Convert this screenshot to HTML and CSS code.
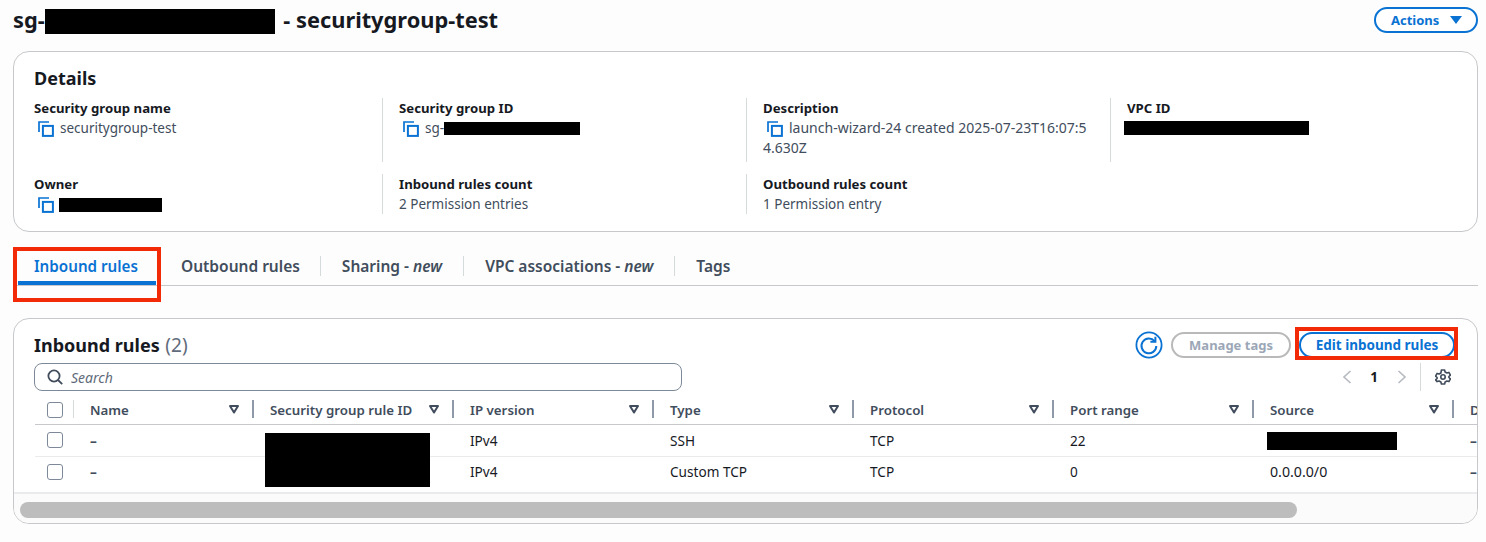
FILE: index.html
```html
<!DOCTYPE html>
<html lang="en">
<head>
  <meta charset="UTF-8" />
  <title>Security group</title>
  <link rel="stylesheet" href="styles.css">
</head>
<body>
  <svg class="defs" width="0" height="0">
    <symbol id="copy" viewBox="0 0 16 16">
      <path d="M1 11V1h10" fill="none" stroke="currentColor" stroke-width="1.7" />
      <rect x="4.9" y="4.9" width="10" height="10" fill="none" stroke="currentColor" stroke-width="2" />
    </symbol>
    <symbol id="sort" viewBox="0 0 12 12">
      <path d="M2 3h8L6 9.5z" fill="none" stroke="currentColor" stroke-width="2" stroke-linejoin="round" />
    </symbol>
  </svg>

  <header class="page-head">
    <h1>sg-<span class="redact redact-title"></span> - securitygroup-test</h1>
    <button class="btn btn-actions">Actions <span class="caret"></span></button>
  </header>

  <section class="card details">
    <h2>Details</h2>
    <div class="detail-grid">
      <div class="item">
        <strong>Security group name</strong>
        <p><svg class="copy"><use href="#copy" /></svg>securitygroup-test</p>
      </div>
      <div class="item">
        <strong>Security group ID</strong>
        <p><svg class="copy"><use href="#copy" /></svg>sg-<span class="redact redact-sg"></span></p>
      </div>
      <div class="item">
        <strong>Description</strong>
        <p class="long"><svg class="copy"><use href="#copy" /></svg>launch-wizard-24 created 2025-07-23T16:07:5<br>4.630Z</p>
      </div>
      <div class="item">
        <strong>VPC ID</strong>
        <p><span class="redact redact-vpc"></span></p>
      </div>
      <div class="item">
        <strong>Owner</strong>
        <p><svg class="copy"><use href="#copy" /></svg><span class="redact redact-owner"></span></p>
      </div>
      <div class="item">
        <strong>Inbound rules count</strong>
        <p>2 Permission entries</p>
      </div>
      <div class="item">
        <strong>Outbound rules count</strong>
        <p>1 Permission entry</p>
      </div>
    </div>
  </section>

  <nav class="tabs">
    <a class="tab active">Inbound rules</a>
    <a class="tab">Outbound rules</a>
    <a class="tab">Sharing - <em>new</em></a>
    <a class="tab">VPC associations - <em>new</em></a>
    <a class="tab">Tags</a>
  </nav>

  <section class="card rules">
    <div class="rules-top">
      <h2>Inbound rules <span class="count">(2)</span></h2>
      <div class="rules-actions">
        <button class="refresh">
          <svg width="28" height="28" viewBox="0 0 28 28" fill="none" stroke="#0972d3">
            <circle cx="14" cy="14" r="12.6" stroke-width="1.8" />
            <path d="M19.6 10.2A7.4 7.4 0 1 0 21.3 15" stroke-width="2" />
            <path d="M20.4 5.8v5h-5" stroke-width="2" />
          </svg>
        </button>
        <button class="btn btn-disabled">Manage tags</button>
        <button class="btn btn-edit">Edit inbound rules</button>
      </div>
    </div>

    <div class="tools">
      <div class="search">
        <svg width="16" height="16" viewBox="0 0 16 16" fill="none" stroke="#414d5c" stroke-width="1.8">
          <circle cx="7" cy="7" r="5.6" />
          <path d="M11 11l4.2 4.2" />
        </svg>
        <span>Search</span>
      </div>
      <div class="pager">
        <svg width="12" height="14" viewBox="0 0 12 14" fill="none" stroke="#b8bcc2" stroke-width="1.7"><path d="M9.5 1L3 7l6.5 6" /></svg>
        <b>1</b>
        <svg width="12" height="14" viewBox="0 0 12 14" fill="none" stroke="#b8bcc2" stroke-width="1.7"><path d="M2.5 1L9 7l-6.5 6" /></svg>
        <i class="pager-sep"></i>
        <svg width="16" height="16" viewBox="0 0 16 16" fill="none" stroke="#414d5c" stroke-width="1.6">
          <path d="M6.4 1h3.2l.5 2 1.8 1 2-.6 1.500 2.700-1.500 1.400v1l1.500 1.400-1.500 2.700-2-.6-1.800 1-.5 2H6.400l-.5-2-1.800-1-2 .6L.6 10.900l1.500-1.400v-1L.6 7.100l1.500-2.700 2 .6 1.800-1z" stroke-linejoin="round" />
          <circle cx="8" cy="8" r="2.200" />
        </svg>
      </div>
    </div>

    <div class="table-wrap">
      <span class="redact redact-rule"></span>
      <table>
        <thead>
          <tr>
            <th class="check"><span class="box"></span></th>
            <th class="name">Name<svg class="sort"><use href="#sort" /></svg></th>
            <th>Security group rule ID<svg class="sort"><use href="#sort" /></svg></th>
            <th>IP version<svg class="sort"><use href="#sort" /></svg></th>
            <th>Type<svg class="sort"><use href="#sort" /></svg></th>
            <th>Protocol<svg class="sort"><use href="#sort" /></svg></th>
            <th>Port range<svg class="sort"><use href="#sort" /></svg></th>
            <th>Source<svg class="sort"><use href="#sort" /></svg></th>
            <th>Description</th>
          </tr>
        </thead>
        <tbody>
          <tr>
            <td class="check"><span class="box"></span></td>
            <td class="dash">–</td>
            <td></td>
            <td>IPv4</td>
            <td>SSH</td>
            <td>TCP</td>
            <td>22</td>
            <td><span class="redact redact-source"></span></td>
            <td class="dash">–</td>
          </tr>
          <tr>
            <td class="check"><span class="box"></span></td>
            <td class="dash">–</td>
            <td></td>
            <td>IPv4</td>
            <td>Custom TCP</td>
            <td>TCP</td>
            <td>0</td>
            <td class="cidr">0.0.0.0/0</td>
            <td class="dash">–</td>
          </tr>
        </tbody>
      </table>
    </div>

    <div class="scroll-track"><div class="scroll-thumb"></div></div>
  </section>
</body>
</html>
```

FILE: styles.css
```css
* { box-sizing: border-box; }
body { margin: 0; padding: 0 8px 0 13px; background: #fdfdfd; color: #16191f; font-family: "Noto Sans", sans-serif; font-size: 14px; height: 542px; overflow: hidden; }
h1, h2, p { margin: 0; }
.defs { position: absolute; }

.redact { display: inline-block; background: #000; }
.redact-title { width: 230px; height: 25px; vertical-align: -6px; margin-right: 3px; }
.redact-sg { width: 136px; height: 13px; vertical-align: -2px; }
.redact-vpc { width: 185px; height: 14px; margin-left: -3px; vertical-align: -2px; }
.redact-owner { width: 103px; height: 14px; vertical-align: -3px; margin-left: -1px; }
.redact-source { width: 130px; height: 18px; vertical-align: -4px; margin-left: -3px; }
.redact-rule { position: absolute; left: 230px; top: 36px; width: 165px; height: 54px; }

.page-head { display: flex; justify-content: space-between; align-items: flex-start; height: 51px; padding-top: 5px; }
h1 { font-size: 21.8px; font-weight: 700; line-height: 30px; color: #16191f; }

.btn { font-family: inherit; font-size: 13.5px; font-weight: 700; background: #fff; border-radius: 14px; height: 26px; }
.btn-actions { display: flex; align-items: center; gap: 11px; width: 104px; padding: 0 0 0 15px; margin-top: 2px; font-size: 13px; color: #0972d3; border: 2px solid #0972d3; }
.caret { width: 0; height: 0; border-left: 6px solid transparent; border-right: 6px solid transparent; border-top: 8px solid #0972d3; }

.card { background: #fff; border: 1px solid #c6c8cb; border-radius: 16px; }
.details { height: 181px; padding: 13px 20px 0; }
.details h2 { font-size: 18px; line-height: 26px; font-weight: 700; }

.detail-grid { display: grid; grid-template-columns: 365px 364px 364px 364px; grid-auto-rows: 64px; row-gap: 12px; margin-top: 7px; }
.item { border-left: 1px solid #d5dbdb; padding-left: 16px; margin-left: -17px; line-height: 20px; }
.item:nth-child(4n+1) { border-left: 0; margin-left: 0; padding-left: 0; }
.item:nth-child(n+5) { height: 40px; }
.item strong { display: block; font-size: 13.2px; font-weight: 700; }
.item p { font-size: 13.5px; color: #414d5c; white-space: nowrap; }
.item p.long { font-size: 14px; }
.copy { width: 16px; height: 16px; color: #0972d3; vertical-align: -4px; margin: 0 6px 0 4px; }

.tabs { display: flex; align-items: center; height: 40px; margin-top: 14px; border-bottom: 1px solid #c6c8cb; }
.tab { position: relative; font-size: 15.5px; font-weight: 600; color: #414d5c; padding: 0 21px; border-left: 1px solid #d5dbdb; line-height: 20px; white-space: nowrap; }
.tab em { font-style: italic; }
.tab.active { font-size: 15.2px; color: #0972d3; border-left: 0; padding: 0 23px 0 21px; }
.tab.active + .tab { border-left: 0; padding: 0 20px; }
.tab.active::before { content: ""; position: absolute; left: 5px; right: 5px; top: 25px; height: 4px; background: #0972d3; }
.tab.active::after { content: ""; position: absolute; left: 0; right: 0; top: -9px; height: 47px; border: 4px solid #f22a07; }

.rules { position: relative; height: 206px; margin-top: 32px; overflow: hidden; }
.rules-top { display: flex; justify-content: space-between; align-items: center; height: 44px; padding: 8px 22px 0 20px; }
.rules-top h2 { font-size: 18px; font-weight: 700; }
.count { font-size: 19px; font-weight: 400; color: #5f6b7a; margin-left: 1px; }
.rules-actions { display: flex; align-items: center; gap: 8px; }
.refresh { width: 28px; height: 28px; padding: 0; border: 0; background: none; }
.btn-disabled { width: 120px; font-size: 13px; color: #9ba7b6; border: 2px solid #b9b9b9; }
.btn-edit { position: relative; width: 156px; color: #0972d3; border: 2px solid #0972d3; }
.btn-edit::after { content: ""; position: absolute; left: -6px; right: -5px; top: -7px; bottom: -4px; border: 4px solid #f22a07; }

.tools { display: flex; justify-content: space-between; height: 34px; padding: 0 26px 0 20px; }
.search { display: flex; align-items: center; gap: 8px; width: 648px; height: 28px; padding-left: 12px; border: 1px solid #7d8998; border-radius: 8px; font-size: 14px; font-style: italic; color: #5f6b7a; }
.pager { display: flex; align-items: center; height: 28px; font-size: 13.5px; }
.pager b { margin: 0 18px 0 17px; }
.pager-sep { width: 1px; height: 28px; background: #d5dbdb; margin: 0 14px 0 12px; }

.table-wrap { position: relative; margin-left: 21px; }
table { border-collapse: collapse; table-layout: fixed; width: 1619px; font-size: 13.6px; }
th:first-child, td:first-child { width: 39px; }
th { width: 200px; height: 27px; padding: 0 0 0 16px; text-align: left; font-weight: 600; font-size: 13.3px; color: #414d5c; border-bottom: 1px solid #c6c8cb; position: relative; white-space: nowrap; }
th.name { width: 180px; }
th + th::after { content: ""; position: absolute; right: 0; top: 3px; height: 18px; width: 2px; background: #8d99a8; }
th:nth-child(2)::before { content: ""; position: absolute; left: -1px; top: 3px; height: 18px; width: 1px; background: #d5dbdb; }
.sort { position: absolute; right: 14px; top: 6px; width: 12px; height: 12px; color: #414d5c; }
td { height: 32px; padding: 0 0 0 16px; border-bottom: 1px solid #e9ebed; color: #16191f; }
td.dash { font-weight: 700; color: #414d5c; }
td.cidr { font-size: 14.2px; }
tbody tr:last-child td { height: 31px; border-bottom: 0; }
th.check, td.check { padding: 0 0 0 12px; }
.box { display: block; width: 16px; height: 16px; background: #fff; border: 1px solid #7d8998; border-radius: 3px; }

.scroll-track { position: absolute; left: 0; right: 0; bottom: 0; height: 31px; padding: 8px 6px 0; background: #fbfbfb; border-top: 2px solid #e9ebed; }
.scroll-thumb { width: 1277px; height: 16px; background: #bdbdbd; border-radius: 8px; }
```
